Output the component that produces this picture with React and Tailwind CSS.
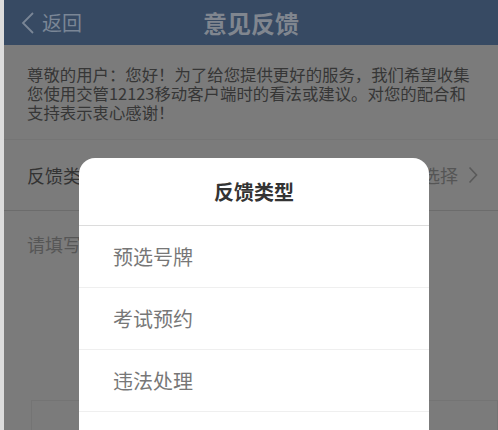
import React from 'react';

const feedbackTypes = ['预选号牌', '考试预约', '违法处理'];

const Feedback = () => {
    return (
        <div
            className="relative h-[430px] w-full overflow-hidden border-l-[4px] border-[#dcdcdc] bg-[#7b7b7b]"
            style={{ fontFamily: '"Noto Sans CJK SC", "Noto Sans", sans-serif' }}
        >
            {/* Header */}
            <div className="relative flex h-[45px] items-center bg-[#374a63]">
                <div className="flex items-center pl-[16px] text-[#7a8696]">
                    <svg width="16" height="24" viewBox="0 0 16 24" fill="none">
                        <path d="M13 2 L3 12 L13 22" stroke="currentColor" strokeWidth="1.8" />
                    </svg>
                    <span className="ml-[6px] text-[20px] leading-none">返回</span>
                </div>
                <h1 className="absolute left-1/2 -translate-x-1/2 text-[24px] font-bold leading-none text-[#80868f]">
                    意见反馈
                </h1>
            </div>

            {/* Intro */}
            <div className="h-[95px] border-b border-[#757575] pl-[23px] pr-[16px] pt-[20px]">
                <p className="text-[16.4px] leading-[19px] text-[#363636]">
                    尊敬的用户：您好！为了给您提供更好的服务，我们希望收集您使用交管12123移动客户端时的看法或建议。对您的配合和支持表示衷心感谢！
                </p>
            </div>

            {/* Type row */}
            <div className="flex h-[71px] items-center justify-between border-b border-[#6c6c6c] pl-[23px] pr-[20px]">
                <span className="text-[18px] text-[#333]">反馈类型</span>
                <div className="flex items-center gap-[10px] text-[18px] text-[#555]">
                    <span>请选择</span>
                    <svg width="10" height="18" viewBox="0 0 10 18" fill="none">
                        <path d="M1.5 1.5 L8.5 9 L1.5 16.5" stroke="#5a5a5a" strokeWidth="1.6" />
                    </svg>
                </div>
            </div>

            {/* Content */}
            <div className="pl-[23px] pt-[20px]">
                <p className="text-[18px] text-[#565656]">请填写</p>
                <div className="ml-[4px] mt-[142px] h-[60px] border border-[#747474]" />
            </div>

            {/* Dialog */}
            <div className="absolute left-[75px] top-[158px] w-[350px] overflow-hidden rounded-[16px] bg-white">
                <div className="flex h-[68px] items-center justify-center border-b border-[#dcdcdc]">
                    <span className="text-[20px] font-bold text-[#333]">反馈类型</span>
                </div>
                {feedbackTypes.map((type) => (
                    <div
                        key={type}
                        className="flex h-[62px] items-center border-b border-[#efefef] pl-[34px] text-[20px] text-[#777]"
                    >
                        {type}
                    </div>
                ))}
                <div className="h-[62px]" />
            </div>
        </div>
    );
};

export default function App() {
    return <Feedback />;
}
